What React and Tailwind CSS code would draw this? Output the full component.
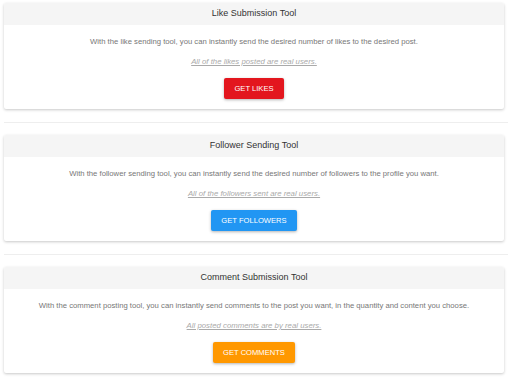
import React from "react";

const tools = [
  {
    title: "Like Submission Tool",
    desc: "With the like sending tool, you can instantly send the desired number of likes to the desired post.",
    note: "All of the likes posted are real users.",
    btn: "GET LIKES",
    cls: "bg-[#e3161e]",
  },
  {
    title: "Follower Sending Tool",
    desc: "With the follower sending tool, you can instantly send the desired number of followers to the profile you want.",
    note: "All of the followers sent are real users.",
    btn: "GET FOLLOWERS",
    cls: "bg-[#2196f3]",
  },
  {
    title: "Comment Submission Tool",
    desc: "With the comment posting tool, you can instantly send comments to the post you want, in the quantity and content you choose.",
    note: "All posted comments are by real users.",
    btn: "GET COMMENTS",
    cls: "bg-[#ff9800]",
  },
];

function Card({ t }) {
  return (
    <div className="w-[500px] h-[106px] bg-white rounded-[2px] shadow-[0_1px_3px_rgba(0,0,0,0.22)] flex flex-col overflow-hidden">
      <div className="h-[22px] bg-[#f5f5f5] flex items-center justify-center text-[9px] text-[#333]">
        {t.title}
      </div>
      <div className="flex flex-col items-center pt-[11px]">
        <p className="text-[7.7px] leading-[12px] text-[#777]">{t.desc}</p>
        <p className="mt-[8px] text-[7.8px] leading-[12px] italic underline text-[#aaa]">{t.note}</p>
        <button
          className={`mt-[10px] h-[21px] px-[10px] rounded-[2px] text-white text-[7.6px] shadow-[0_1px_3px_rgba(0,0,0,0.3)] ${t.cls}`}
        >
          {t.btn}
        </button>
      </div>
    </div>
  );
}

export default function App() {
  return (
    <div
      className="w-[512px] h-[382px] bg-white pt-[3px] px-[4px]"
      style={{ fontFamily: "'Liberation Sans', Arial, sans-serif" }}
    >
      {tools.map((t, i) => (
        <React.Fragment key={i}>
          {i > 0 && <div className="mt-[13px] mb-[12px] h-px bg-[#eeeeee]" />}
          <Card t={t} />
        </React.Fragment>
      ))}
    </div>
  );
}
